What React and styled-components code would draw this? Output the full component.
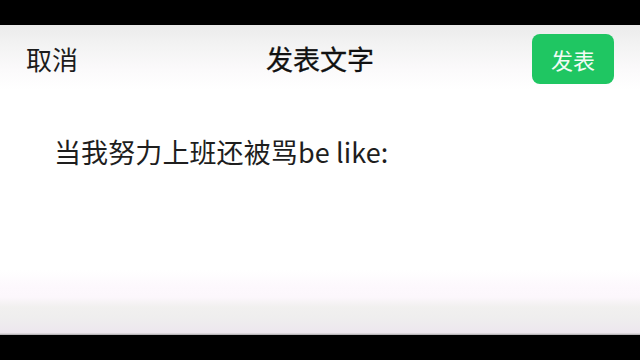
import React from "react";
import styled, { createGlobalStyle } from "styled-components";

const Global = createGlobalStyle`
  html, body { margin: 0; padding: 0; background: #000; }
  body { font-family: "Noto Sans CJK SC", "Noto Sans", sans-serif; }
`;

const Page = styled.div`
  width: 640px;
  height: 360px;
  display: flex;
  flex-direction: column;
  background: #000;
`;

const BlackBar = styled.div`
  height: ${(p) => p.$h}px;
  background: #000;
  flex: none;
`;

const Screen = styled.div`
  height: 310px;
  flex: none;
  display: flex;
  flex-direction: column;
  background: linear-gradient(
    to bottom,
    #ebebeb 0px,
    #f3f3f3 20px,
    #fbfafb 45px,
    #ffffff 65px,
    #ffffff 245px,
    #fdf8fd 262px,
    #fcf7fc 272px,
    #f1f0ef 282px,
    #efeeee 292px,
    #ede7ee 306px,
    #ece6ec 308px,
    #c9c6c9 309px,
    #a9a6a9 310px
  );
`;

const Header = styled.div`
  display: flex;
  align-items: center;
  justify-content: space-between;
  padding: 9px 26px 0 26px;
  height: 50px;
  position: relative;
`;

const Cancel = styled.span`
  font-size: 26px;
  line-height: 36px;
  color: #1c1c1c;
`;

const Title = styled.span`
  position: absolute;
  left: 0;
  right: 0;
  text-align: center;
  font-size: 27px;
  line-height: 36px;
  font-weight: 400;
  color: #111;
  -webkit-text-stroke: 0.3px #111;
  pointer-events: none;
`;

const PublishButton = styled.button`
  width: 82px;
  height: 50px;
  border: none;
  border-radius: 8px;
  background: #1fc662;
  color: #f2fbf5;
  font-family: inherit;
  font-size: 22px;
  font-weight: 400;
  padding: 0;
  display: flex;
  align-items: center;
  justify-content: center;
`;

const Body = styled.div`
  padding: 50px 54px 0 54px;
`;

const Content = styled.p`
  margin: 0;
  font-size: 27px;
  line-height: 36px;
  color: #1e1e1e;
  letter-spacing: 0.1px;
`;

export default function App() {
  return (
    <>
      <Global />
      <Page>
        <BlackBar $h={25} />
        <Screen>
          <Header>
            <Cancel>取消</Cancel>
            <Title>发表文字</Title>
            <PublishButton>发表</PublishButton>
          </Header>
          <Body>
            <Content>当我努力上班还被骂be like:</Content>
          </Body>
        </Screen>
        <BlackBar $h={25} />
      </Page>
    </>
  );
}
